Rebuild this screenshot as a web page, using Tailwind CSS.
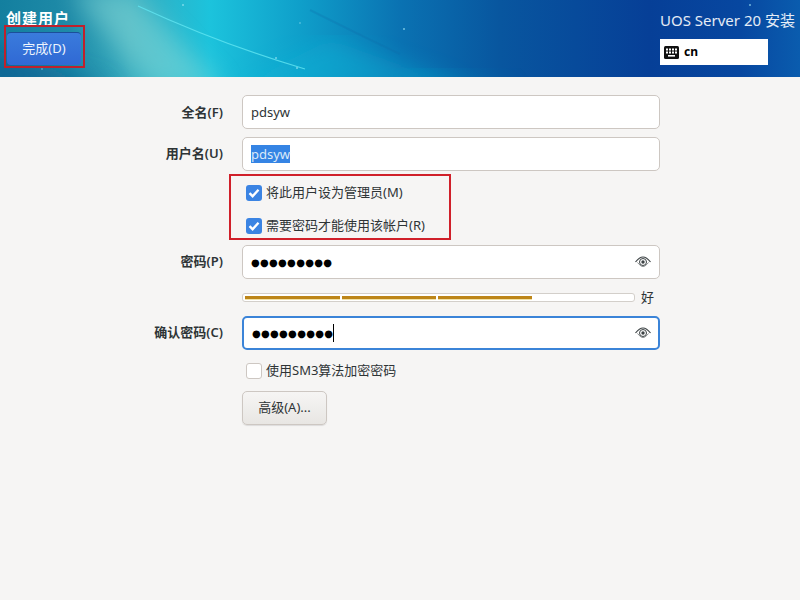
<!DOCTYPE html>
<html lang="zh">
<head>
  <meta charset="UTF-8" />
  <title>创建用户</title>
  <script src="https://cdn.jsdelivr.net/npm/@tailwindcss/browser@4"></script>
</head>
<body class="w-[800px] h-[600px] overflow-hidden bg-[#f6f5f4] text-[#2e3436] text-[13px] font-['Noto_Sans','Noto_Sans_CJK_SC',sans-serif] relative">

  <!-- header banner -->
  <header class="relative h-[77px] overflow-hidden bg-[linear-gradient(90deg,#137f9f_0px,#1f8ba8_70px,#35aabd_130px,#1cc3dc_210px,#0f9fca_300px,#0a72b2_400px,#08569f_500px,#063f97_650px,#0747a0_740px,#0a5cae_800px)]">
    <svg class="absolute inset-0" width="800" height="77" viewBox="0 0 800 77">
      <defs>
        <filter id="soft"><feGaussianBlur stdDeviation="12" /></filter>
        <filter id="softer"><feGaussianBlur stdDeviation="0.7" /></filter>
      </defs>
      <polygon points="70,-10 130,-10 225,90 150,90" fill="#8fdcd8" opacity="0.5" filter="url(#soft)" />
      <polygon points="-20,45 120,90 -20,90" fill="#0b5f92" opacity="0.8" filter="url(#soft)" />
      <polygon points="230,90 470,90 330,40" fill="#0fb6d8" opacity="0.45" filter="url(#soft)" />
      <polygon points="400,90 520,90 400,70" fill="#0e97c2" opacity="0.6" filter="url(#soft)" />
      <path d="M138 6 C190 30 240 50 305 69" fill="none" stroke="#62e6f2" stroke-width="1.2" opacity="0.8" filter="url(#softer)" />
      <path d="M310 10 C340 25 370 40 400 54" fill="none" stroke="#0b6ba8" stroke-width="2" opacity="0.25" filter="url(#softer)" />
      <g fill="#9fe6f5" opacity="0.7">
        <circle cx="183" cy="5" r="1" />
        <circle cx="276" cy="58" r="1" />
        <circle cx="297" cy="68" r="1" />
        <circle cx="300" cy="23" r="0.8" />
        <circle cx="404" cy="29" r="1" />
        <circle cx="750" cy="5" r="1" />
        <circle cx="42" cy="69" r="0.8" />
      </g>
    </svg>

    <div class="relative flex justify-between h-full">
      <div class="pl-[6px]">
        <h1 class="h-[32px] pt-[6px] text-[15px] leading-[24px] font-bold text-white tracking-[1px]">创建用户</h1>
        <button class="ml-px w-[74px] h-[33px] rounded-[4px] border-t border-[#1b4f9a] bg-[linear-gradient(#3a7bdc,#3069d4)] text-[13px] text-[#eef4fd]">完成(D)</button>
      </div>
      <div class="w-[140px]">
        <div class="h-[39px] text-[15px] leading-[40px] text-white/90 whitespace-nowrap">UOS Server 20 安装</div>
        <div class="w-[108px] h-[26px] bg-white flex items-center gap-[5px] pl-[4px] text-black font-bold text-[12px]">
          <svg width="15" height="13" viewBox="0 0 15 13">
            <rect width="15" height="13" rx="1.5" fill="#111" />
            <g fill="#fff">
              <rect x="2" y="2.5" width="2" height="2" />
              <rect x="5" y="2.5" width="2" height="2" />
              <rect x="8" y="2.5" width="2" height="2" />
              <rect x="11" y="2.5" width="2" height="2" />
              <rect x="2" y="5.5" width="2" height="2" />
              <rect x="5" y="5.5" width="2" height="2" />
              <rect x="8" y="5.5" width="2" height="2" />
              <rect x="11" y="5.5" width="2" height="2" />
              <rect x="4" y="9" width="7" height="1.6" />
            </g>
          </svg>
          <span>cn</span>
        </div>
      </div>
    </div>
  </header>

  <!-- form -->
  <main class="pt-[18px] flex flex-col">
    <div class="flex items-center h-[34px]">
      <label class="w-[223px] pt-px text-right font-semibold">全名(F)</label>
      <div class="ml-[19px] w-[418px] h-full flex items-center pt-px px-[8px] bg-white border border-[#cdc7c2] rounded-[5px]">pdsyw</div>
    </div>

    <div class="flex items-center h-[34px] mt-[8px]">
      <label class="w-[223px] text-right font-semibold">用户名(U)</label>
      <div class="ml-[19px] w-[418px] h-full flex items-center px-[8px] bg-white border border-[#cdc7c2] rounded-[5px]">
        <span class="bg-[#3584e4] text-[#dbe9f9] leading-[18px]">pdsyw</span>
      </div>
    </div>

    <div class="flex items-center h-[33px] mt-[5px] pl-[246px] gap-[4px]">
      <span class="w-[16px] h-[16px] rounded-[3px] bg-[#3b84e3] flex items-center justify-center">
        <svg width="14" height="14" viewBox="0 0 14 14"><path d="M2.5 7.2 L5.6 10.2 L11.5 3.8" fill="none" stroke="#fff" stroke-width="2.4" /></svg>
      </span>
      <span>将此用户设为管理员(M)</span>
    </div>
    <div class="flex items-center h-[33px] pl-[246px] gap-[4px]">
      <span class="w-[16px] h-[16px] rounded-[3px] bg-[#3b84e3] flex items-center justify-center">
        <svg width="14" height="14" viewBox="0 0 14 14"><path d="M2.5 7.2 L5.6 10.2 L11.5 3.8" fill="none" stroke="#fff" stroke-width="2.4" /></svg>
      </span>
      <span>需要密码才能使用该帐户(R)</span>
    </div>

    <div class="flex items-center h-[34px] mt-[3px]">
      <label class="w-[223px] text-right font-semibold">密码(P)</label>
      <div class="ml-[19px] w-[418px] h-full flex items-center justify-between px-[8px] bg-white border border-[#cdc7c2] rounded-[5px]">
        <span class="font-['DejaVu_Sans',sans-serif] text-[10px] tracking-[0.3px] text-black">●●●●●●●●●</span>
        <svg width="16" height="12" viewBox="0 0 16 12" fill="none" stroke="#3d4345">
          <path d="M0.5 6 C3.5 2.2 6 1 8 1 C10 1 12.5 2.2 15.5 6" stroke-width="1.2" />
          <path d="M2.5 6.5 C5 9.5 6.5 10.5 8 10.5 C9.5 10.5 11 9.5 13.5 6.5" stroke-width="0.6" />
          <circle cx="8" cy="6" r="3.5" stroke-width="1" />
          <circle cx="8" cy="6" r="1.7" fill="#3d4345" stroke="none" />
        </svg>
      </div>
    </div>

    <div class="flex items-center h-[9px] mt-[14px] pl-[242px]">
      <div class="w-[393px] h-[9px] flex gap-[2px] items-start p-[2px] rounded-[3px] bg-white border border-[#d3cfca]">
        <span class="w-[95px] h-[3px] bg-[#bd8518] shadow-[0_1px_0_#f2e2a6]"></span>
        <span class="w-[94px] h-[3px] bg-[#bd8518] shadow-[0_1px_0_#f2e2a6]"></span>
        <span class="w-[94px] h-[3px] bg-[#bd8518] shadow-[0_1px_0_#f2e2a6]"></span>
      </div>
      <span class="ml-[6px]">好</span>
    </div>

    <div class="flex items-center h-[34px] mt-[14px]">
      <label class="w-[223px] text-right font-semibold">确认密码(C)</label>
      <div class="ml-[19px] w-[418px] h-full flex items-center justify-between pl-[8px] pr-[7px] bg-white border-2 border-[#3b84d8] rounded-[5px]">
        <span class="flex items-center">
          <span class="font-['DejaVu_Sans',sans-serif] text-[10px] tracking-[0.3px] text-black">●●●●●●●●●</span>
          <span class="w-px h-[18px] bg-black"></span>
        </span>
        <svg width="16" height="12" viewBox="0 0 16 12" fill="none" stroke="#3d4345">
          <path d="M0.5 6 C3.5 2.2 6 1 8 1 C10 1 12.5 2.2 15.5 6" stroke-width="1.2" />
          <path d="M2.5 6.5 C5 9.5 6.5 10.5 8 10.5 C9.5 10.5 11 9.5 13.5 6.5" stroke-width="0.6" />
          <circle cx="8" cy="6" r="3.5" stroke-width="1" />
          <circle cx="8" cy="6" r="1.7" fill="#3d4345" stroke="none" />
        </svg>
      </div>
    </div>

    <div class="flex items-center h-[33px] mt-[4px] pl-[246px] gap-[4px]">
      <span class="w-[16px] h-[16px] rounded-[3px] bg-white border border-[#cdc7c2]"></span>
      <span>使用SM3算法加密密码</span>
    </div>

    <div class="pl-[242px] mt-[4px]">
      <button class="w-[85px] h-[34px] rounded-[5px] border border-[#cdc7c2] bg-[linear-gradient(#f6f5f4,#e8e6e3)] shadow-[0_1px_1px_rgba(0,0,0,0.1)]">高级(A)...</button>
    </div>
  </main>

  <!-- red annotation boxes -->
  <div class="absolute left-[4px] top-[25px] w-[81px] h-[43px] border-2 border-[#c0202c]"></div>
  <div class="absolute left-[229px] top-[174px] w-[222px] h-[66px] border-2 border-[#d0202a]"></div>
</body>
</html>
